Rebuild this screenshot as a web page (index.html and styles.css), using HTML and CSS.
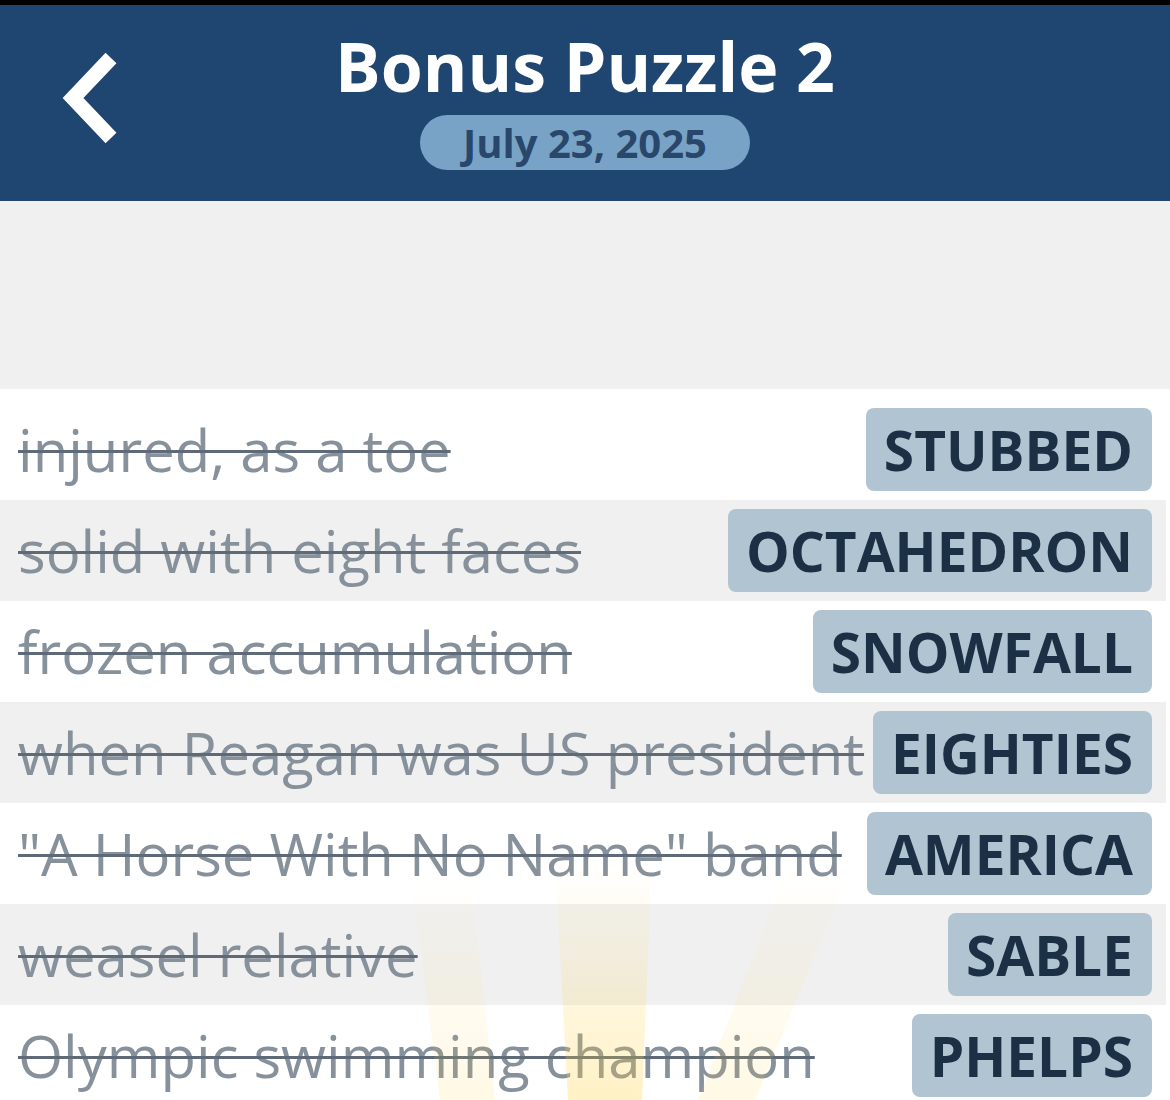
FILE: index.html
```html
<!DOCTYPE html>
<html lang="en">
<head>
    <meta charset="UTF-8">
    <meta name="viewport" content="width=device-width, initial-scale=1.0">
    <title>Bonus Puzzle 2</title>
    <link rel="stylesheet" href="styles.css">
</head>
<body>
    <div class="statusbar"></div>
    <header class="header">
        <button class="back" aria-label="Back">
            <svg width="64" height="96" viewBox="0 0 64 96">
                <polyline points="52,8 14,48 52,88" fill="none" stroke="#fff" stroke-width="15" stroke-linejoin="miter"/>
            </svg>
        </button>
        <h1 class="title">Bonus Puzzle 2</h1>
        <div class="date">July 23, 2025</div>
    </header>
    <div class="board"></div>
    <ul class="clues">
        <li class="clue"><span class="hint">injured, as a toe</span><span class="answer">STUBBED</span></li>
        <li class="clue"><span class="hint">solid with eight faces</span><span class="answer">OCTAHEDRON</span></li>
        <li class="clue"><span class="hint">frozen accumulation</span><span class="answer">SNOWFALL</span></li>
        <li class="clue"><span class="hint">when Reagan was US president</span><span class="answer">EIGHTIES</span></li>
        <li class="clue"><span class="hint">"A Horse With No Name" band</span><span class="answer">AMERICA</span></li>
        <li class="clue"><span class="hint">weasel relative</span><span class="answer">SABLE</span></li>
        <li class="clue"><span class="hint">Olympic swimming champion</span><span class="answer">PHELPS</span></li>
    </ul>
    <svg class="rays" width="1170" height="1100" viewBox="0 0 1170 1100">
        <defs>
            <linearGradient id="glow" x1="0" y1="0" x2="0" y2="1">
                <stop offset="0" stop-color="#ffd23f" stop-opacity="0"/>
                <stop offset="0.35" stop-color="#ffd23f" stop-opacity="0.1"/>
                <stop offset="1" stop-color="#ffd23f" stop-opacity="0.3"/>
            </linearGradient>
        </defs>
        <polygon points="555,860 652,860 642,1100 568,1100" fill="url(#glow)"/>
        <polygon points="410,870 470,870 495,1100 440,1100" fill="url(#glow)" opacity="0.45"/>
        <polygon points="790,860 855,860 755,1100 698,1100" fill="url(#glow)" opacity="0.45"/>
    </svg>
</body>
</html>
```

FILE: styles.css
```css
body {
    margin: 0;
    background: #ffffff;
    font-family: "Open Sans", "Noto Sans", sans-serif;
    position: relative;
    overflow: hidden;
}
.statusbar {
    height: 5px;
    background: #000;
}
.header {
    height: 196px;
    background: #1f4670;
    display: flex;
    flex-direction: column;
    align-items: center;
    position: relative;
}
.back {
    position: absolute;
    left: 59px;
    top: 45px;
    padding: 0;
    border: none;
    background: none;
    cursor: pointer;
}
.title {
    margin: 18px 0 0;
    color: #fff;
    font-size: 68px;
    font-weight: 700;
    line-height: 86px;
}
.date {
    margin-top: 6px;
    height: 55px;
    padding: 0 43px;
    border-radius: 28px;
    background: #78a3c7;
    color: #29476a;
    font-size: 40px;
    font-weight: 700;
    line-height: 55px;
}
.board {
    height: 188px;
    background: #f0f0f0;
}
.clues {
    list-style: none;
    margin: 0 4px 0 0;
    padding: 10px 0 0;
}
.clue {
    height: 101px;
    display: flex;
    align-items: center;
    gap: 9px;
    padding: 0 14px 0 18px;
}
.clue:nth-child(even) {
    background: #f0f0f0;
}
.hint {
    flex: 1;
    min-width: 0;
    white-space: nowrap;
    color: #87919c;
    font-size: 58px;
    text-decoration: line-through;
    text-decoration-color: #5e6a77;
    text-decoration-thickness: 3px;
}
.answer {
    flex-shrink: 0;
    height: 83px;
    padding: 0 19px 0 18px;
    border-radius: 8px;
    background: #b1c4d2;
    color: #1c3045;
    font-size: 55px;
    font-weight: 700;
    line-height: 83px;
}
.rays {
    position: absolute;
    left: 0;
    top: 0;
    pointer-events: none;
}
```
